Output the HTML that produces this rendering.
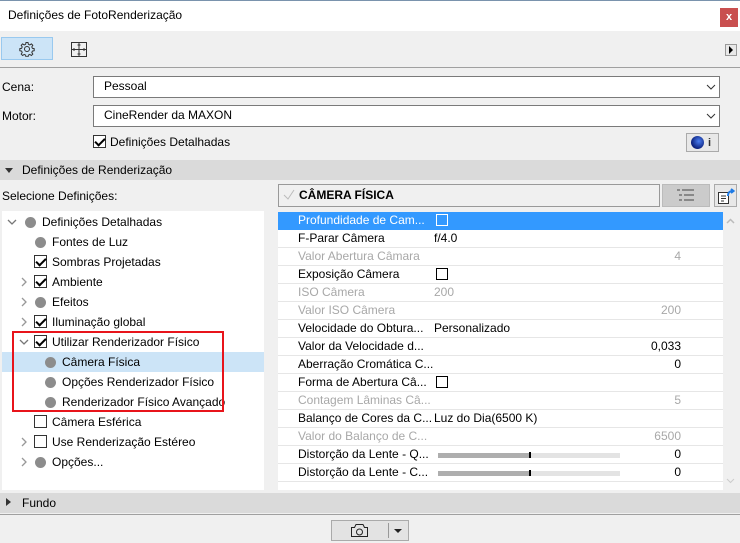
<!DOCTYPE html><html><head><style>
*{margin:0;padding:0;box-sizing:border-box}
body{width:740px;height:543px;background:#f0f0f0;font-family:"Segoe UI","Liberation Sans",sans-serif;font-size:12px;color:#000;position:relative;overflow:hidden}
.a{position:absolute}
.cb{position:absolute;width:13px;height:13px;border:1px solid #333;background:#fff}
.ck::after{content:"";position:absolute;left:3px;top:0px;width:4px;height:8px;border:solid #000;border-width:0 2px 2px 0;transform:rotate(45deg)}
.dot{position:absolute;width:11px;height:11px;border-radius:50%;background:#8c8c8c}
.t{position:absolute;white-space:nowrap;line-height:20px}
.row{position:absolute;left:0;width:445px;height:18px;border-bottom:1px solid #e6e6e6;line-height:17px}
.row .l{position:absolute;left:20px}
.row .v{position:absolute;left:156px}
.row .r{position:absolute;right:42px}
.g{color:#a8a8a8}
.sl{position:absolute;left:160px;top:7px;width:182px;height:5px;background:#e3e3e3}
.sl::before{content:"";position:absolute;left:0;top:0;width:91px;height:5px;background:#aeaeae}
.sl::after{content:"";position:absolute;left:91px;top:-1px;width:2px;height:6px;background:#000}
</style></head><body>
<div class="a" style="left:0;top:0;width:740px;height:31px;background:#fff;border-top:1px solid #7a93ad"></div>
<div class="t" style="left:8px;top:5px">Definições de FotoRenderização</div>
<div class="a" style="left:720px;top:8px;width:18px;height:19px;background:#c94f4f;color:#fff;font-size:11px;text-align:center;line-height:18px;font-weight:bold">x</div>
<div class="a" style="left:1px;top:37px;width:52px;height:23px;background:#cce4f7;border:1px solid #99c9ef"></div>
<svg class="a" style="left:19px;top:41px" width="16" height="16" viewBox="0 0 16 16" fill="none" stroke="#333" stroke-width="1"><circle cx="8" cy="8" r="2.5"/><path d="M7 1.5h2l.4 1.8 1.4.6 1.6-1 1.4 1.4-1 1.6.6 1.4 1.8.4v2l-1.8.4-.6 1.4 1 1.6-1.4 1.4-1.6-1-1.4.6-.4 1.8h-2l-.4-1.8-1.4-.6-1.6 1-1.4-1.4 1-1.6-.6-1.4-1.8-.4v-2l1.8-.4.6-1.4-1-1.6 1.4-1.4 1.6 1 1.4-.6z"/></svg>
<svg class="a" style="left:71px;top:42px" width="16" height="15" viewBox="0 0 16 15" fill="none" stroke="#333"><rect x=".5" y=".5" width="15" height="14"/><path d="M8 .5v14M.5 7.5h15M3 6v3M13 6v3M6.5 3h3M6.5 12h3"/></svg>
<div class="a" style="left:725px;top:44px;width:12px;height:12px;border:1px solid #999;background:#e8e8e8"></div>
<div class="a" style="left:729px;top:46px;width:0;height:0;border-left:4px solid #000;border-top:4px solid transparent;border-bottom:4px solid transparent"></div>
<div class="a" style="left:0;top:67px;width:740px;height:1px;background:#a0a0a0"></div>
<div class="t" style="left:2px;top:77px">Cena:</div>
<div class="a" style="left:93px;top:76px;width:627px;height:22px;background:#fff;border:1px solid #7a7a7a"></div>
<div class="t" style="left:104px;top:76px">Pessoal</div>
<div class="t" style="left:2px;top:106px">Motor:</div>
<div class="a" style="left:93px;top:105px;width:627px;height:22px;background:#fff;border:1px solid #7a7a7a"></div>
<div class="t" style="left:104px;top:105px">CineRender da MAXON</div>
<svg class="a" style="left:706px;top:84px" width="10" height="6"><path d="M1 1l4 4 4-4" stroke="#333" fill="none"/></svg>
<svg class="a" style="left:706px;top:113px" width="10" height="6"><path d="M1 1l4 4 4-4" stroke="#333" fill="none"/></svg>
<div class="cb ck" style="left:93px;top:135px"></div>
<div class="t" style="left:110px;top:132px">Definições Detalhadas</div>
<div class="a" style="left:686px;top:133px;width:33px;height:19px;border:1px solid #aaa;background:#e8e8e8"></div>
<div class="a" style="left:691px;top:136px;width:13px;height:13px;border-radius:50%;background:radial-gradient(circle at 60% 40%,#4a7df0,#0b1f7a 70%,#aaa)"></div>
<div class="a" style="left:708px;top:134px;font-weight:bold;font-size:11px;color:#333;line-height:18px">i</div>
<div class="a" style="left:0;top:160px;width:740px;height:20px;background:#dadada"></div>
<div class="a" style="left:5px;top:168px;border-top:5px solid #333;border-left:4px solid transparent;border-right:4px solid transparent"></div>
<div class="t" style="left:22px;top:160px">Definições de Renderização</div>
<div class="t" style="left:2px;top:186px">Selecione Definições:</div>
<div class="a" style="left:2px;top:211px;width:262px;height:279px;background:#fff"></div>
<div class="a" style="left:2px;top:352px;width:262px;height:20px;background:#cce4f7"></div>
<svg class="a" style="left:7px;top:219px" width="10" height="6"><path d="M1 1l4 4 4-4" stroke="#777" fill="none" stroke-width="1.3"/></svg>
<svg class="a" style="left:19px;top:339px" width="10" height="6"><path d="M1 1l4 4 4-4" stroke="#777" fill="none" stroke-width="1.3"/></svg>
<svg class="a" style="left:21px;top:277px" width="6" height="10"><path d="M1 1l4 4-4 4" stroke="#999" fill="none" stroke-width="1.3"/></svg>
<svg class="a" style="left:21px;top:297px" width="6" height="10"><path d="M1 1l4 4-4 4" stroke="#999" fill="none" stroke-width="1.3"/></svg>
<svg class="a" style="left:21px;top:317px" width="6" height="10"><path d="M1 1l4 4-4 4" stroke="#999" fill="none" stroke-width="1.3"/></svg>
<svg class="a" style="left:21px;top:437px" width="6" height="10"><path d="M1 1l4 4-4 4" stroke="#999" fill="none" stroke-width="1.3"/></svg>
<svg class="a" style="left:21px;top:457px" width="6" height="10"><path d="M1 1l4 4-4 4" stroke="#999" fill="none" stroke-width="1.3"/></svg>
<div class="dot" style="left:25px;top:217px"></div><div class="t" style="left:42px;top:212px">Definições Detalhadas</div>
<div class="dot" style="left:35px;top:237px"></div><div class="t" style="left:52px;top:232px">Fontes de Luz</div>
<div class="cb ck" style="left:34px;top:255px"></div><div class="t" style="left:52px;top:252px">Sombras Projetadas</div>
<div class="cb ck" style="left:34px;top:275px"></div><div class="t" style="left:52px;top:272px">Ambiente</div>
<div class="dot" style="left:35px;top:297px"></div><div class="t" style="left:52px;top:292px">Efeitos</div>
<div class="cb ck" style="left:34px;top:315px"></div><div class="t" style="left:52px;top:312px">Iluminação global</div>
<div class="cb ck" style="left:34px;top:335px"></div><div class="t" style="left:52px;top:332px">Utilizar Renderizador Físico</div>
<div class="dot" style="left:45px;top:357px"></div><div class="t" style="left:62px;top:352px">Câmera Física</div>
<div class="dot" style="left:45px;top:377px"></div><div class="t" style="left:62px;top:372px">Opções Renderizador Físico</div>
<div class="dot" style="left:45px;top:397px"></div><div class="t" style="left:62px;top:392px">Renderizador Físico Avançado</div>
<div class="a" style="left:12px;top:331px;width:212px;height:81px;border:2px solid #e8141b"></div>
<div class="cb" style="left:34px;top:415px"></div><div class="t" style="left:52px;top:412px">Câmera Esférica</div>
<div class="cb" style="left:34px;top:435px"></div><div class="t" style="left:52px;top:432px">Use Renderização Estéreo</div>
<div class="dot" style="left:35px;top:457px"></div><div class="t" style="left:52px;top:452px">Opções...</div>
<div class="a" style="left:278px;top:184px;width:382px;height:23px;border:1px solid #999;background:#f0f0f0"></div>
<svg class="a" style="left:283px;top:189px" width="12" height="12"><path d="M1 6l4 4 6-9" stroke="#bbb" fill="none"/></svg>
<div class="t" style="left:299px;top:185px;font-weight:bold">CÂMERA FÍSICA</div>
<div class="a" style="left:662px;top:184px;width:48px;height:23px;background:#cbcbcb;border:1px solid #bbb"></div>
<svg class="a" style="left:677px;top:189px" width="18" height="13" fill="#888"><rect x="0" y="0" width="3" height="2"/><rect x="5" y="0" width="12" height="2"/><rect x="2" y="5" width="3" height="2"/><rect x="7" y="5" width="10" height="2"/><rect x="2" y="10" width="3" height="2"/><rect x="7" y="10" width="10" height="2"/></svg>
<div class="a" style="left:714px;top:184px;width:23px;height:23px;background:#e8e8e8;border:1px solid #aaa"></div>
<svg class="a" style="left:717px;top:187px" width="18" height="18"><rect x="1.5" y="5.5" width="10" height="11" fill="#fff" stroke="#333"/><path d="M4 9h5M4 11.5h5M4 14h3" stroke="#333"/><path d="M11 9c0-4 2-5 5-5M14 2l2.5 2-2.5 2" stroke="#1e7be6" stroke-width="2" fill="none"/></svg>
<div class="a" style="left:278px;top:212px;width:445px;height:278px;background:#fff;overflow:hidden">
<div class="row" style="top:0;background:#3399ff;color:#fff;border:0"><span class="l">Profundidade de Cam...</span><span class="a" style="left:158px;top:2px;width:12px;height:12px;border:1px solid #fff"></span></div>
<div class="row" style="top:18px"><span class="l">F-Parar Câmera</span><span class="v">f/4.0</span></div>
<div class="row g" style="top:36px"><span class="l">Valor Abertura Câmara</span><span class="r">4</span></div>
<div class="row" style="top:54px"><span class="l">Exposição Câmera</span><span class="cb" style="left:158px;top:2px;width:12px;height:12px;border-color:#000"></span></div>
<div class="row g" style="top:72px"><span class="l">ISO Câmera</span><span class="v">200</span></div>
<div class="row g" style="top:90px"><span class="l">Valor ISO Câmera</span><span class="r">200</span></div>
<div class="row" style="top:108px"><span class="l">Velocidade do Obtura...</span><span class="v">Personalizado</span></div>
<div class="row" style="top:126px"><span class="l">Valor da Velocidade d...</span><span class="r">0,033</span></div>
<div class="row" style="top:144px"><span class="l">Aberração Cromática C...</span><span class="r">0</span></div>
<div class="row" style="top:162px"><span class="l">Forma de Abertura Câ...</span><span class="cb" style="left:158px;top:2px;width:12px;height:12px;border-color:#000"></span></div>
<div class="row g" style="top:180px"><span class="l">Contagem Lâminas Câ...</span><span class="r">5</span></div>
<div class="row" style="top:198px"><span class="l">Balanço de Cores da C...</span><span class="v">Luz do Dia(6500 K)</span></div>
<div class="row g" style="top:216px"><span class="l">Valor do Balanço de C...</span><span class="r">6500</span></div>
<div class="row" style="top:234px"><span class="l">Distorção da Lente - Q...</span><span class="sl"></span><span class="r">0</span></div>
<div class="row" style="top:252px"><span class="l">Distorção da Lente - C...</span><span class="sl"></span><span class="r">0</span></div>
</div>
<div class="a" style="left:723px;top:212px;width:15px;height:278px;background:#f0f0f0"></div>
<svg class="a" style="left:726px;top:218px" width="9" height="6"><path d="M1 5l3.5-3.5L8 5" stroke="#bbb" fill="none" stroke-width="1.5"/></svg>
<svg class="a" style="left:726px;top:478px" width="9" height="6"><path d="M1 1l3.5 3.5L8 1" stroke="#ccc" fill="none"/></svg>
<div class="a" style="left:0;top:493px;width:740px;height:20px;background:#dadada"></div>
<div class="a" style="left:6px;top:498px;border-left:5px solid #333;border-top:4px solid transparent;border-bottom:4px solid transparent"></div>
<div class="t" style="left:22px;top:493px">Fundo</div>
<div class="a" style="left:0;top:514px;width:740px;height:1px;background:#a0a0a0"></div>
<div class="a" style="left:331px;top:520px;width:78px;height:21px;border:1px solid #aaa;background:#e3e3e3"></div>
<svg class="a" style="left:350px;top:523px" width="19" height="15" fill="none" stroke="#222"><path d="M1.5 4.5h3l1.5-3h7l1.5 3h3v9h-16z"/><circle cx="9.5" cy="9" r="3"/></svg>
<div class="a" style="left:388px;top:523px;width:1px;height:15px;background:#999"></div>
<div class="a" style="left:394px;top:529px;border-top:4px solid #222;border-left:4px solid transparent;border-right:4px solid transparent"></div>
</body></html>
